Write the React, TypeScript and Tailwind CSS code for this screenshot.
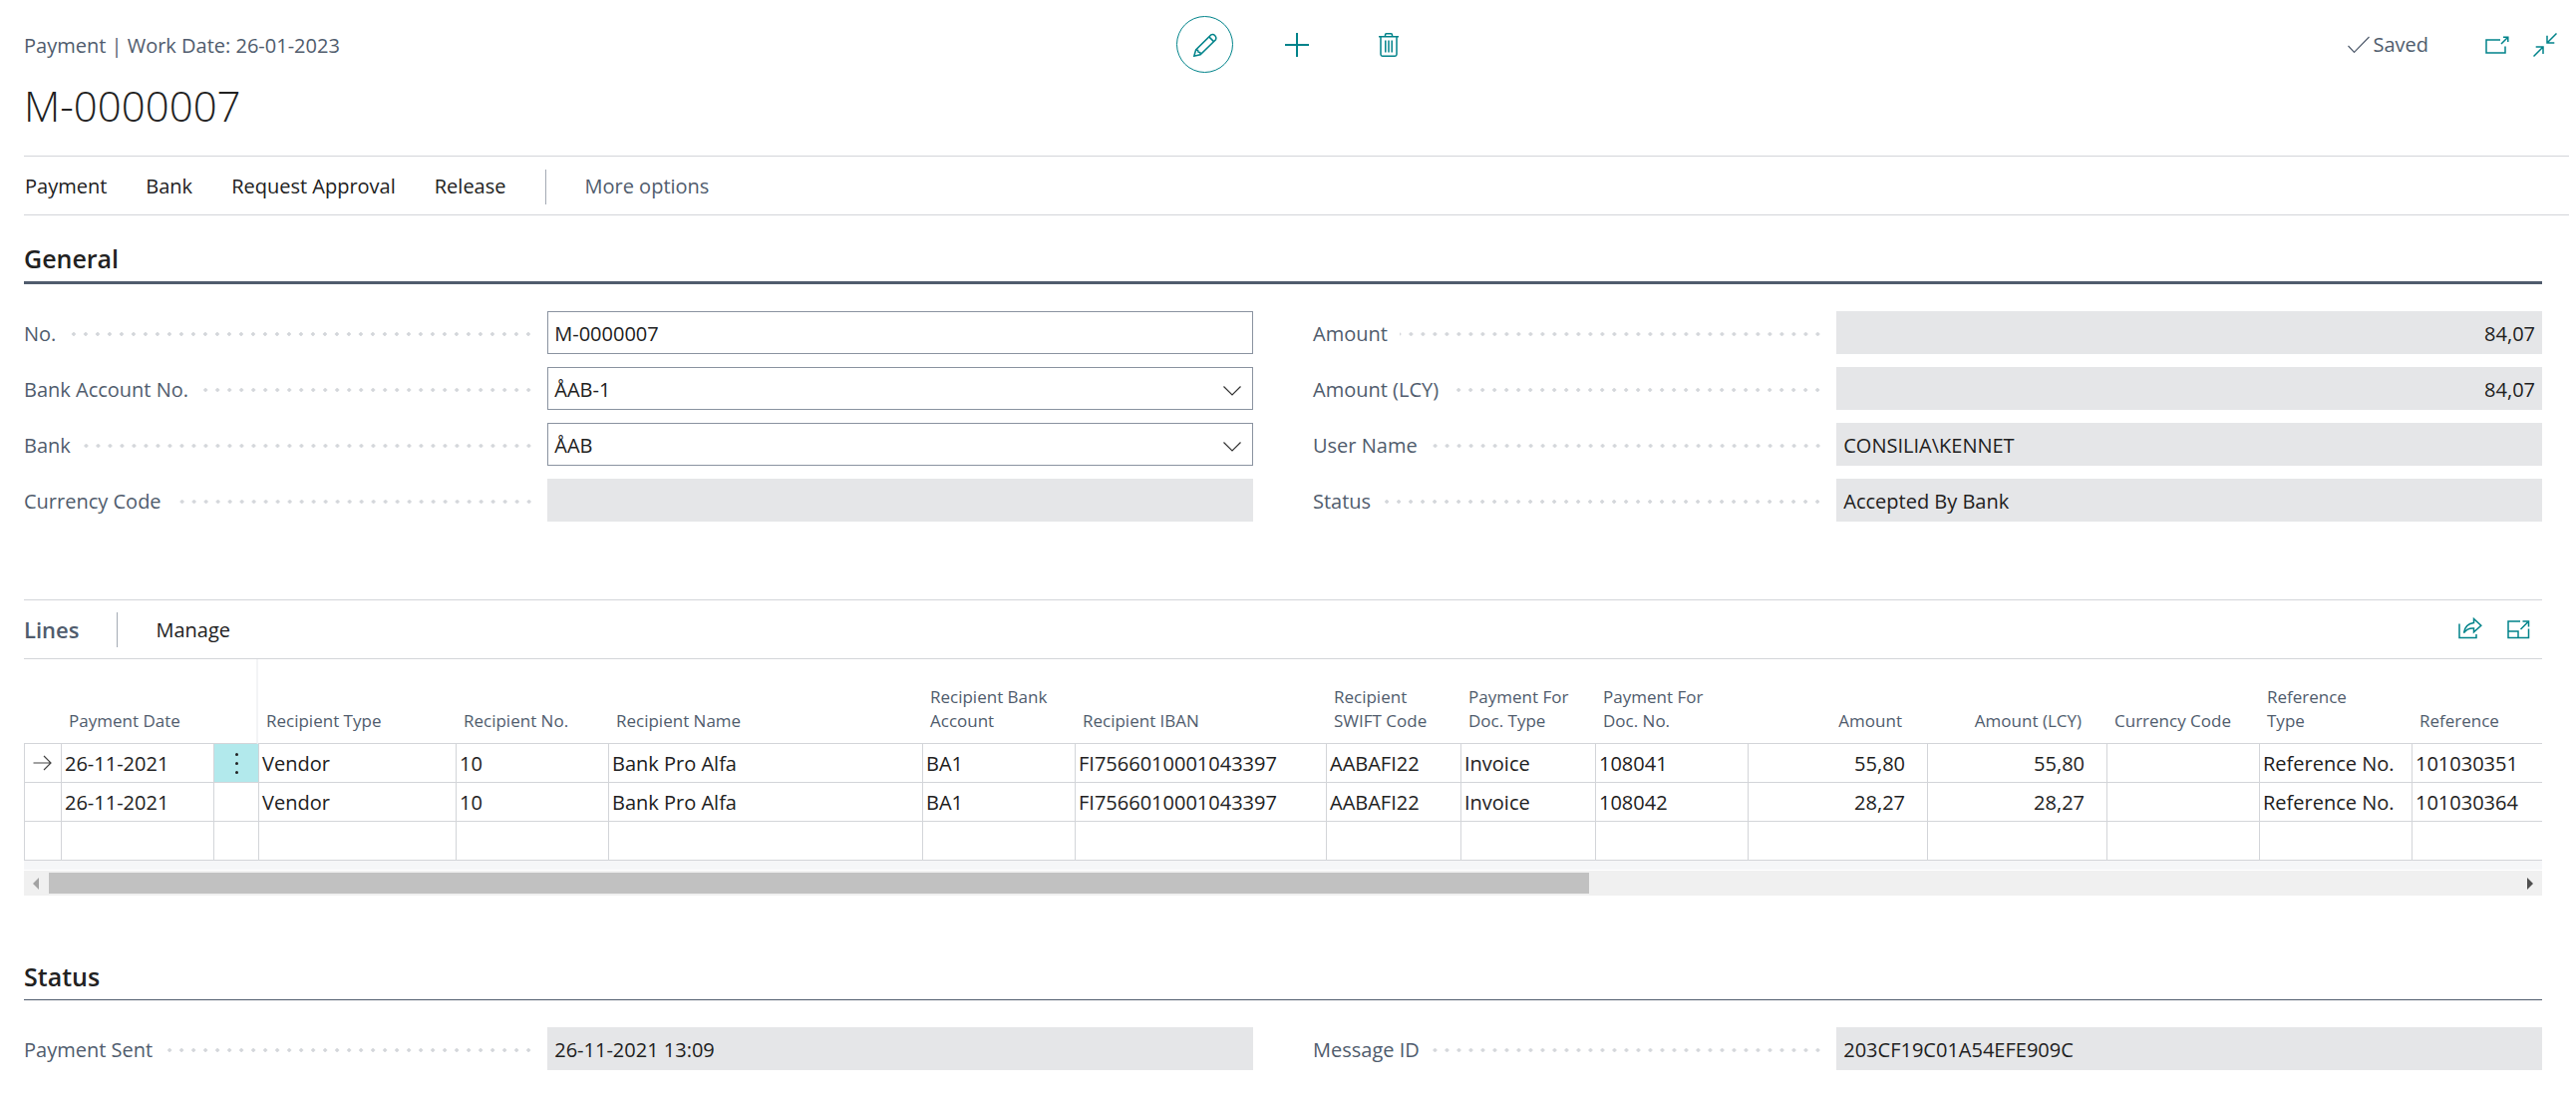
import React, { useState } from 'react';

const headerCell = 'px-2 pb-[10px] align-bottom text-left font-normal text-[17px] leading-6 whitespace-pre-line text-[#505c6d]';

const columns = [
  { key: 'date', title: 'Payment Date', width: 'w-[153px]' },
  { key: 'menu', title: '', width: 'w-[45px]' },
  { key: 'type', title: 'Recipient Type', width: 'w-[198px]' },
  { key: 'no', title: 'Recipient No.', width: 'w-[153px]' },
  { key: 'name', title: 'Recipient Name', width: 'w-[315px]' },
  { key: 'account', title: 'Recipient Bank\nAccount', width: 'w-[153px]' },
  { key: 'iban', title: 'Recipient IBAN', width: 'w-[252px]' },
  { key: 'swift', title: 'Recipient\nSWIFT Code', width: 'w-[135px]' },
  { key: 'docType', title: 'Payment For\nDoc. Type', width: 'w-[135px]' },
  { key: 'docNo', title: 'Payment For\nDoc. No.', width: 'w-[153px]' },
  { key: 'amount', title: 'Amount', width: 'w-[180px]', right: true },
  { key: 'amountLcy', title: 'Amount (LCY)', width: 'w-[180px]', right: true },
  { key: 'currency', title: 'Currency Code', width: 'w-[153px]' },
  { key: 'refType', title: 'Reference\nType', width: 'w-[153px]' },
  { key: 'ref', title: 'Reference', width: '' }
];

const lines: any[] = [
  {
    date: '26-11-2021', type: 'Vendor', no: '10', name: 'Bank Pro Alfa', account: 'BA1',
    iban: 'FI7566010001043397', swift: 'AABAFI22', docType: 'Invoice', docNo: '108041',
    amount: '55,80', amountLcy: '55,80', currency: '', refType: 'Reference No.', ref: '101030351'
  },
  {
    date: '26-11-2021', type: 'Vendor', no: '10', name: 'Bank Pro Alfa', account: 'BA1',
    iban: 'FI7566010001043397', swift: 'AABAFI22', docType: 'Invoice', docNo: '108042',
    amount: '28,27', amountLcy: '28,27', currency: '', refType: 'Reference No.', ref: '101030364'
  },
  {}
];

const Svg = ({ size = 24, className = '', children }: any) => (
  <svg
    width={size}
    height={size}
    viewBox={`0 0 ${size} ${size}`}
    fill="none"
    stroke="currentColor"
    strokeWidth="1.5"
    className={className}
    aria-hidden="true"
  >
    {children}
  </svg>
);

const Field = ({ id, label, children }: any) => (
  <div className="flex items-center h-[43px]">
    <div className="flex items-center w-[42.6%] shrink-0 pt-0.5 pr-[13px]">
      <label htmlFor={id} className="text-[#505c6d] whitespace-nowrap">{label}</label>
      <span className="flex-1 h-1 ml-3 bg-[radial-gradient(circle,#d3d6da_1.5px,transparent_2px)] bg-[length:12px_4px] bg-repeat-x bg-right" />
    </div>
    {children}
  </div>
);

const ReadOnly = ({ id, label, value, right }: any) => (
  <Field id={id} label={label}>
    <input
      id={id}
      type="text"
      value={value}
      readOnly
      className={`flex-1 min-w-0 h-full pt-0.5 px-[7px] bg-[#e5e6e8] text-[#212121] outline-none ${right ? 'text-right' : ''}`}
    />
  </Field>
);

const Lookup = ({ id, label, value }: any) => (
  <Field id={id} label={label}>
    <div className="relative flex-1 min-w-0 h-full">
      <select
        id={id}
        defaultValue={value}
        className="w-full h-full pt-0.5 pl-[6px] pr-10 appearance-none bg-white border border-[#8a93a0] text-[#212121]"
      >
        <option>{value}</option>
      </select>
      <svg width="20" height="12" viewBox="0 0 20 12" fill="none" stroke="#333" strokeWidth="1.2" className="absolute right-[11px] top-[18px] pointer-events-none" aria-hidden="true">
        <path d="M1.5 1.5 L10 10 L18.5 1.5" />
      </svg>
    </div>
  </Field>
);

const Header = () => (
  <header className="pl-6 pr-[7px] pt-4">
    <div className="grid grid-cols-[1fr_auto_1fr] items-center h-[57px]">
      <div className="pt-0.5 text-[#505c6d]">Payment | Work Date: 26-01-2023</div>
      <div className="flex items-center gap-9 text-[#00838a]">
        <button aria-label="Edit" className="flex items-center justify-center w-[57px] h-[57px] border border-[#00838a] rounded-full">
          <Svg>
            <path d="M0.8 23.2 L2.6 17 L17.8 1.9 A3.6 3.6 0 0 1 22.5 6.7 L7.1 21.8 Z" />
            <path d="M15.8 3.9 L20.5 8.6 M2.6 17 L4.6 17.3 L5 19.2 L6.9 19.6 L7.1 21.8" />
          </Svg>
        </button>
        <button aria-label="New" className="flex items-center justify-center w-14 h-14">
          <Svg><path d="M12 0 V24 M0 12 H24" strokeWidth="2" /></Svg>
        </button>
        <button aria-label="Delete" className="flex items-center justify-center w-14 h-14">
          <Svg>
            <path d="M2 3.8 H22 M4 4 V21.5 Q4 23.2 5.7 23.2 H18.3 Q20 23.2 20 21.5 V4 M8.5 3.5 V2 Q8.5 0.8 9.7 0.8 H14.3 Q15.5 0.8 15.5 2 V3.5" />
            <path d="M8.8 7.5 V19.5 M12 7.5 V19.5 M15.2 7.5 V19.5" />
          </Svg>
        </button>
      </div>
      <div className="flex items-center justify-end pr-3 text-[#00838a]">
        <span className="flex items-center gap-[3px] mr-[57px] text-[#505c6d]">
          <Svg size={22}><path d="M0.5 12 L6.5 18.5 L21.5 3" strokeWidth="1.2" /></Svg>
          Saved
        </span>
        <button aria-label="Open in new window" className="mr-6">
          <Svg>
            <path d="M15 7 H1 V20 H20 V13.5" />
            <path d="M16 11 L22.5 4.5 M18 4.3 H22.8 V9" />
          </Svg>
        </button>
        <button aria-label="Collapse">
          <Svg>
            <path d="M23.5 0.5 L14 10 M14 2.8 V10 H21.3" />
            <path d="M0.5 23.5 L10 14 M2.7 14 H10 V21" />
          </Svg>
        </button>
      </div>
    </div>
    <h1 className="mt-[7px] pb-[25px] text-[42px] leading-[51px] font-light text-[#212121]">M-0000007</h1>
    <nav className="flex items-center h-[60px] pt-0.5 border-y border-[#d3d5d9] text-[#212121]">
      <button className="mr-[39px] ml-px">Payment</button>
      <button className="mr-[39px]">Bank</button>
      <button className="mr-[39px]">Request Approval</button>
      <button className="mr-[39px]">Release</button>
      <span className="w-px h-[35px] mr-[39px] bg-[#a4abb5]" />
      <button className="text-[#505c6d]">More options</button>
    </nav>
  </header>
);

const LinesTable = () => (
  <table className="w-full table-fixed border-separate border-spacing-0 text-[#212121]">
    <thead>
      <tr className="h-[85px]">
        <th className="w-[37px] border-b border-[#d3d5d9]" />
        {columns.map((c) => (
          <th
            key={c.key}
            scope="col"
            className={`${headerCell} ${c.width} border-b border-b-[#d3d5d9] ${c.right ? '!text-right !pr-[25px]' : ''} ${c.key === 'menu' ? 'border-r-2 border-r-[#f3f4f6]' : ''}`}
          >
            {c.title}
          </th>
        ))}
      </tr>
    </thead>
    <tbody>
      {lines.map((line, i) => (
        <tr key={i} className="h-[39px]">
          <td className="border-l border-b border-[#d3d5d9] p-0">
            {i === 0 && (
              <Svg size={20} className="ml-2"><path d="M0.5 10 H18 M11 3 L18 10 L11 17" stroke="#444" strokeWidth="1.2" /></Svg>
            )}
          </td>
          {columns.map((c) =>
            c.key === 'menu' ? (
              <td key={c.key} className={`border-l border-b border-[#d3d5d9] p-0 ${i === 0 ? 'bg-[#b2e9ec]' : ''}`}>
                {i === 0 && (
                  <button aria-label="Show more options" className="flex flex-col items-center justify-center gap-[6px] w-full h-[38px]">
                    <span className="w-[3px] h-[3px] rounded-full bg-[#212121]" />
                    <span className="w-[3px] h-[3px] rounded-full bg-[#212121]" />
                    <span className="w-[3px] h-[3px] rounded-full bg-[#212121]" />
                  </button>
                )}
              </td>
            ) : (
              <td
                key={c.key}
                className={`border-l border-b border-[#d3d5d9] pt-0.5 pb-0 pl-[3px] leading-9 whitespace-nowrap ${c.right ? 'text-right pr-[22px]' : 'pr-0'}`}
              >
                {line[c.key]}
              </td>
            )
          )}
        </tr>
      ))}
    </tbody>
  </table>
);

const App = () => {
  const [number, setNumber] = useState('M-0000007');

  return (
    <div className="pb-10 bg-white text-[20px] leading-7 font-['Open_Sans','Noto_Sans',sans-serif]">
      <Header />
      <main className="pl-6 pr-[34px]">
        <section>
          <h2 className="pt-[25px] pb-[5px] text-[25px] leading-9 font-semibold text-[#212121] border-b-[3px] border-[#505c6d]">General</h2>
          <div className="grid grid-cols-2 gap-x-[60px] pt-[27px]">
            <div className="flex flex-col gap-[13px]">
              <Field id="no" label="No.">
                <input
                  id="no"
                  type="text"
                  value={number}
                  onChange={(e) => setNumber(e.target.value)}
                  className="flex-1 min-w-0 h-full pt-0.5 px-[6px] bg-white border border-[#8a93a0] text-[#212121]"
                />
              </Field>
              <Lookup id="bank-account" label="Bank Account No." value="ÅAB-1" />
              <Lookup id="bank" label="Bank" value="ÅAB" />
              <ReadOnly id="currency" label="Currency Code" value="" />
            </div>
            <div className="flex flex-col gap-[13px]">
              <ReadOnly id="amount" label="Amount" value="84,07" right />
              <ReadOnly id="amount-lcy" label="Amount (LCY)" value="84,07" right />
              <ReadOnly id="user" label="User Name" value="CONSILIA\KENNET" />
              <ReadOnly id="status" label="Status" value="Accepted By Bank" />
            </div>
          </div>
        </section>

        <section className="mt-[78px]">
          <div className="flex items-center h-[60px] border-y border-[#d3d5d9]">
            <h2 className="text-[22px] font-semibold text-[#505c6d]">Lines</h2>
            <span className="w-px h-[35px] mx-[38px] bg-[#a4abb5]" />
            <button className="pt-0.5 text-[#212121]">Manage</button>
            <div className="flex items-center gap-6 ml-auto mr-3 text-[#00838a]">
              <button aria-label="Share">
                <Svg>
                  <path d="M1 6.5 V20.5 H18 V17" />
                  <path d="M5.5 15.5 Q7 6.5 15.5 5.5 V1.5 L22.8 8.3 L15.5 14.8 V11 Q9 10.5 5.5 15.5 Z" />
                </Svg>
              </button>
              <button aria-label="Expand">
                <Svg>
                  <path d="M14 4 H2 V20.5 H22.5 V11.5 M2 14 H12 V20.5" />
                  <path d="M14.5 12 L21.5 5 M16.5 4 H22.5 V9.5" />
                </Svg>
              </button>
            </div>
          </div>
          <LinesTable />
          <div className="h-[9px] mb-px bg-[#f5f6f8]" />
          <div className="flex items-center h-[25px] bg-[#f0f0f0]">
            <svg width="25" height="12" viewBox="0 0 25 12" fill="#a3a3a3" aria-hidden="true"><path d="M15 0 V12 L9 6 Z" /></svg>
            <div className="flex-1">
              <div className="w-[62.4%] h-[21px] bg-[#c1c1c1]" />
            </div>
            <svg width="25" height="12" viewBox="0 0 25 12" fill="#505050" aria-hidden="true"><path d="M10 0 V12 L16 6 Z" /></svg>
          </div>
        </section>

        <section className="mt-[63px]">
          <h2 className="pb-[5px] text-[25px] leading-9 font-semibold text-[#212121] border-b border-[#505c6d]">Status</h2>
          <div className="grid grid-cols-2 gap-x-[60px] pt-[27px]">
            <ReadOnly id="sent" label="Payment Sent" value="26-11-2021 13:09" />
            <ReadOnly id="message" label="Message ID" value="203CF19C01A54EFE909C" />
          </div>
        </section>
      </main>
    </div>
  );
};

export default App;
